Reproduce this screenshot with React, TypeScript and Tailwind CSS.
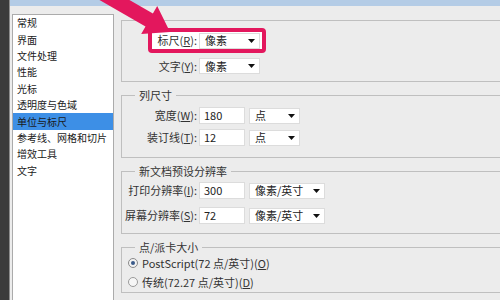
import React from "react";

const Arrow = () => (
  <svg width="7" height="4" viewBox="0 0 7 4" className="shrink-0">
    <path d="M0 0 L7 0 L3.5 4 Z" fill="#111" />
  </svg>
);

const Drop = ({ text, w }: { text: string; w: string }) => (
  <div className={`${w} h-[16px] bg-white border border-[#dcdcdc] flex items-center justify-between pl-[5px] pr-[4px] text-[11px] text-[#222] leading-none`}>
    <span>{text}</span>
    <Arrow />
  </div>
);

const Input = ({ text }: { text: string }) => (
  <div className="w-[46px] h-[17px] bg-white border border-[#dcdcdc] flex items-center pl-[4px] text-[11px] text-[#222] leading-none">
    {text}
  </div>
);

const Label = ({ children }: { children: React.ReactNode }) => (
  <div className="w-[77px] shrink-0 text-right pr-[2px] text-[11px] text-[#333] leading-none whitespace-nowrap">
    {children}
  </div>
);

const Group = ({
  title,
  h,
  pt,
  children,
}: {
  title?: string;
  h: string;
  pt: string;
  children: React.ReactNode;
}) => (
  <div className={`relative w-[420px] ${h} ${pt} border border-[#bfbfbf] flex flex-col shrink-0`}>
    {title && (
      <span className="absolute -top-[7px] left-[13px] px-[4px] bg-[#ececec] text-[11px] leading-[12px] text-[#333]">
        {title}
      </span>
    )}
    {children}
  </div>
);

const U = ({ c }: { c: string }) => <span className="underline">{c}</span>;

export default function App() {
  const items = [
    "常规",
    "界面",
    "文件处理",
    "性能",
    "光标",
    "透明度与色域",
    "单位与标尺",
    "参考线、网格和切片",
    "增效工具",
    "文字",
  ];
  return (
    <div className="relative w-[500px] h-[300px] overflow-hidden flex bg-[#ececec] font-['Noto_Sans_CJK_SC','Noto_Sans',sans-serif]">
      <div className="w-[10px] h-full bg-[#3b3b3b] border-r border-[#8c8c8c] shrink-0" />
      <div className="flex-1 flex flex-col">
        <div className="h-[6px] bg-[#b4cce6] shrink-0" />
        <div className="flex flex-1">
          <div className="ml-[2px] mt-[8px] w-[102px] shrink-0 bg-white border border-[#ababab] border-b-0 flex flex-col pt-0">
            {items.map((t, i) => (
              <div
                key={t}
                className={`h-[16.4px] flex items-center pl-[4px] text-[10px] leading-none whitespace-nowrap ${
                  i === 6 ? "bg-[#3d8fe6] text-[#1a1a1a]" : "text-[#1a1a1a]"
                }`}
              >
                {t}
              </div>
            ))}
          </div>
          <div className="ml-[7px] flex flex-col">
            <div className="mt-[14px]">
              <Group h="h-[62px]" pt="pt-[7px]">
                <div className="flex items-center">
                  <div className="w-[26px] shrink-0" />
                  <div className="w-[118px] h-[25px] border-4 border-[#e3175d] rounded-[4px] bg-white flex items-center">
                    <div className="w-[47px] text-right pr-[2px] text-[11px] text-[#333] leading-none whitespace-nowrap">
                      标尺(<U c="R" />):
                    </div>
                    <Drop text="像素" w="w-[61px]" />
                  </div>
                </div>
                <div className="flex items-center mt-[5px]">
                  <Label>
                    文字(<U c="Y" />):
                  </Label>
                  <Drop text="像素" w="w-[61px]" />
                </div>
              </Group>
            </div>
            <div className="mt-[13px]">
              <Group title="列尺寸" h="h-[63px]" pt="pt-[11px]">
                <div className="flex items-center">
                  <Label>
                    宽度(<U c="W" />):
                  </Label>
                  <Input text="180" />
                  <div className="ml-[4px]">
                    <Drop text="点" w="w-[51px]" />
                  </div>
                </div>
                <div className="flex items-center mt-[5px]">
                  <Label>
                    装订线(<U c="T" />):
                  </Label>
                  <Input text="12" />
                  <div className="ml-[4px]">
                    <Drop text="点" w="w-[51px]" />
                  </div>
                </div>
              </Group>
            </div>
            <div className="mt-[13px]">
              <Group title="新文档预设分辨率" h="h-[63px]" pt="pt-[10px]">
                <div className="flex items-center">
                  <Label>
                    打印分辨率(<U c="I" />):
                  </Label>
                  <Input text="300" />
                  <div className="ml-[4px]">
                    <Drop text="像素/英寸" w="w-[76px]" />
                  </div>
                </div>
                <div className="flex items-center mt-[8px]">
                  <Label>
                    屏幕分辨率(<U c="S" />):
                  </Label>
                  <Input text="72" />
                  <div className="ml-[4px]">
                    <Drop text="像素/英寸" w="w-[76px]" />
                  </div>
                </div>
              </Group>
            </div>
            <div className="mt-[13px]">
              <Group title="点/派卡大小" h="h-[46px]" pt="pt-[7px]">
                <div className="flex items-center h-[16px] pl-[6px] text-[11px] text-[#333] leading-none">
                  <div className="w-[10px] h-[10px] rounded-full border border-[#8a8a8a] bg-[#f2f2f2] flex items-center justify-center">
                    <div className="w-[4px] h-[4px] rounded-full bg-[#3a5a8a]" />
                  </div>
                  <span className="ml-[4px]">
                    PostScript(72 点/英寸)(<U c="O" />)
                  </span>
                </div>
                <div className="flex items-center h-[16px] mt-[3px] pl-[6px] text-[11px] text-[#333] leading-none">
                  <div className="w-[10px] h-[10px] rounded-full border border-[#9a9a9a] bg-[#f6f6f6]" />
                  <span className="ml-[4px]">
                    传统(72.27 点/英寸)(<U c="D" />)
                  </span>
                </div>
              </Group>
            </div>
          </div>
        </div>
      </div>
      <svg
        className="absolute left-0 top-0 pointer-events-none"
        width="500"
        height="300"
        viewBox="0 0 500 300"
      >
        <polygon
          points="41.5,-33.4 145.5,26.5 141.2,33.9 170,32 157.2,6.1 152.9,13.5 48.9,-46.4"
          fill="#e3175d"
        />
      </svg>
    </div>
  );
}
